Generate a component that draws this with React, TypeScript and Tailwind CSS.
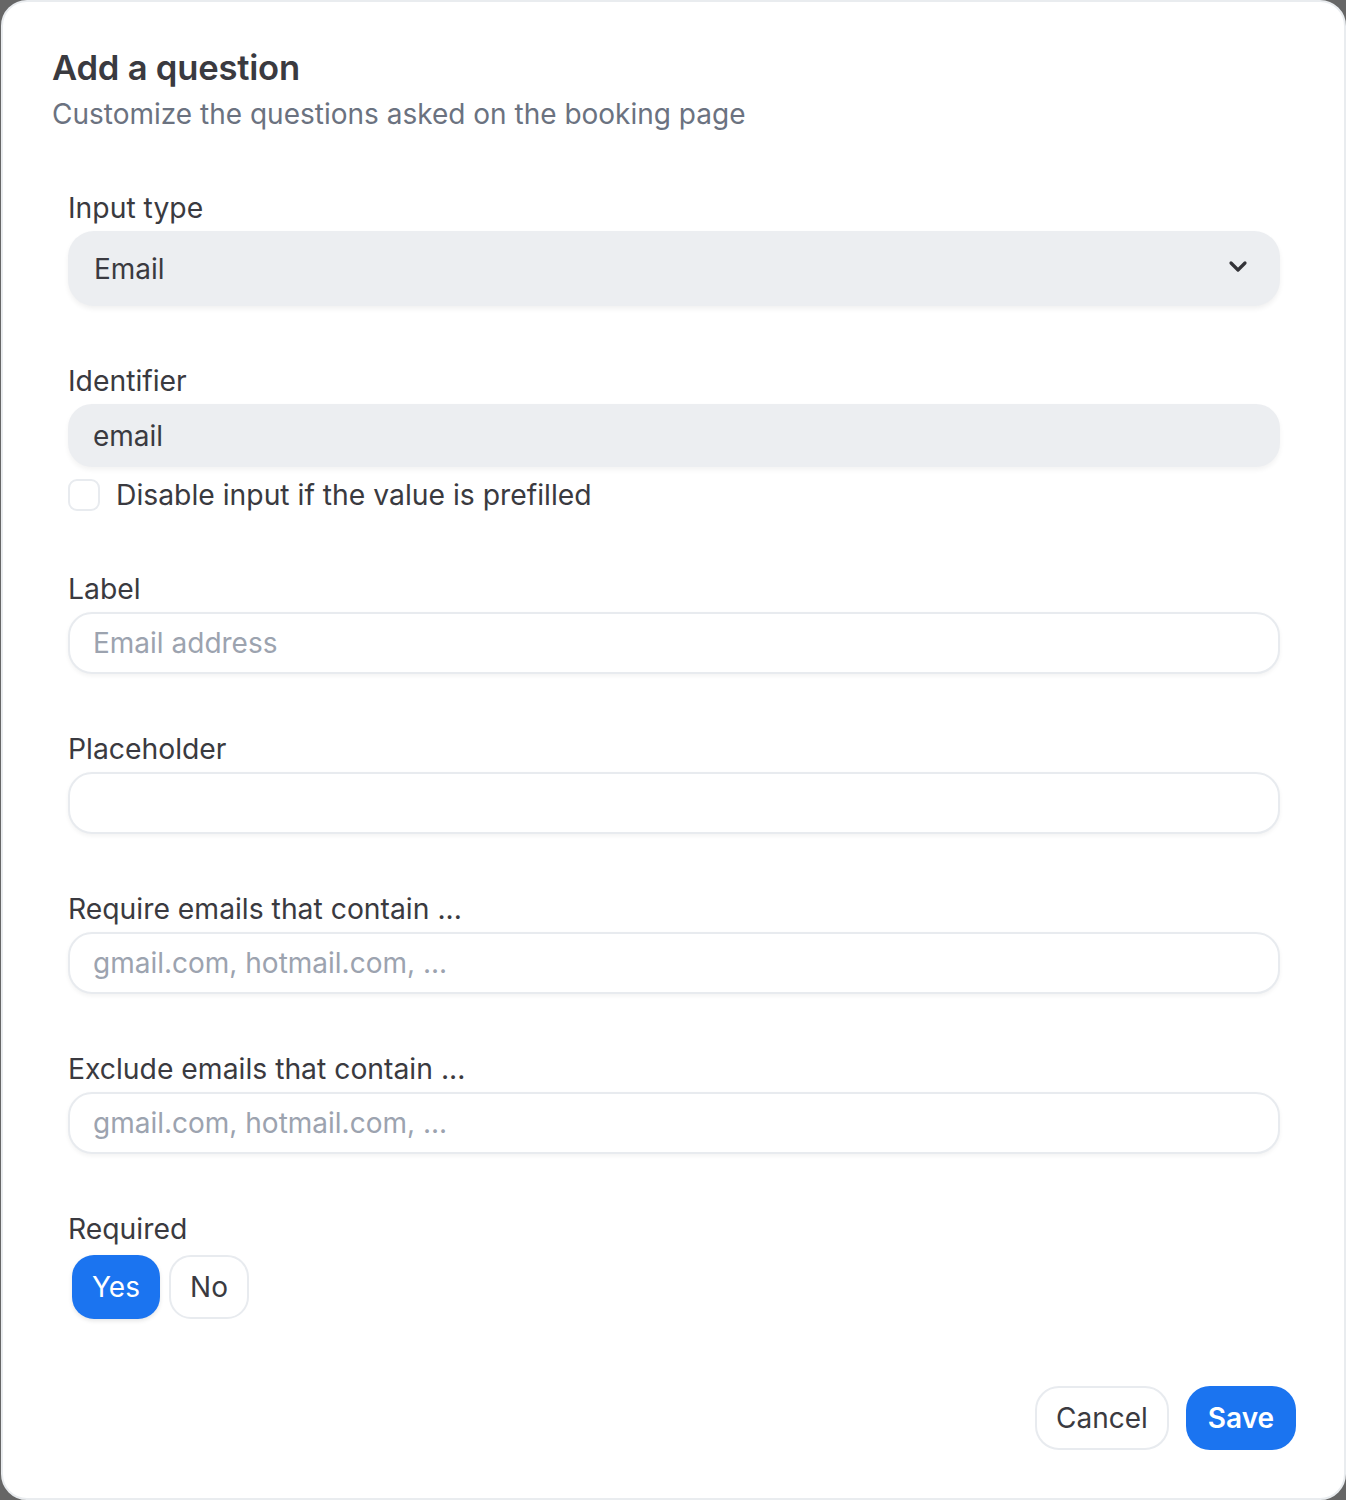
import React from "react";

function Label({ children }: { children: React.ReactNode }) {
  return <div className="text-[28.3px] leading-[40px] text-[#3a3a40] mb-[3px]">{children}</div>;
}

function TextInput({ placeholder }: { placeholder?: string }) {
  return (
    <div className="h-[62px] w-full rounded-[24px] border-2 border-[#e8ebef] bg-white shadow-[0_2px_4px_rgba(0,0,0,0.05)] flex items-center px-[23px]">
      <span className="text-[28px] text-[#9ca3af]">{placeholder ?? ""}</span>
    </div>
  );
}

export default function App() {
  return (
    <div className="w-[1346px] h-[1500px] bg-[#666666]" style={{ fontFamily: "Inter, 'Noto Sans', sans-serif" }}>
      <div className="w-[1345px] h-[1500px] ml-[1px] rounded-[26px] bg-white border-2 border-[#e9ecef] flex flex-col pl-[49px] pr-[48px] pt-[42px]">
        <h1 className="text-[34.6px] leading-[46px] font-semibold text-[#3a3a40] tracking-[-0.2px]">Add a question</h1>
        <p className="text-[28px] leading-[40px] text-[#6b7280] mt-[4px]">Customize the questions asked on the booking page</p>

        <div className="pl-[16px] pr-[16px] mt-[54px] flex flex-col">
          <div>
            <Label>Input type</Label>
            <div className="h-[75px] w-full rounded-[26px] bg-[#eceef1] shadow-[0_3px_5px_rgba(0,0,0,0.06)] flex items-center justify-between pl-[26px] pr-[30px]">
              <span className="text-[28px] text-[#3a3a40]">Email</span>
              <svg width="24" height="24" viewBox="0 0 24 24" fill="none" stroke="#333338" strokeWidth="3.2" strokeLinecap="round" strokeLinejoin="round" className="-mt-[6px]">
                <path d="M5 9l7 7 7-7" />
              </svg>
            </div>
          </div>

          <div className="mt-[55px]">
            <Label>Identifier</Label>
            <div className="h-[63px] w-full rounded-[24px] bg-[#eceef1] shadow-[0_3px_5px_rgba(0,0,0,0.05)] flex items-center px-[25px]">
              <span className="text-[28px] text-[#3a3a40]">email</span>
            </div>
            <div className="mt-[8px] h-[40px] flex items-center gap-[16px]">
              <div className="w-[32px] h-[32px] rounded-[9px] border-2 border-[#e8ebef] bg-white" />
              <span className="text-[28.3px] text-[#3a3a40]">Disable input if the value is prefilled</span>
            </div>
          </div>

          <div className="mt-[54px]">
            <Label>Label</Label>
            <TextInput placeholder="Email address" />
          </div>

          <div className="mt-[55px]">
            <Label>Placeholder</Label>
            <TextInput />
          </div>

          <div className="mt-[55px]">
            <Label>Require emails that contain ...</Label>
            <TextInput placeholder="gmail.com, hotmail.com, ..." />
          </div>

          <div className="mt-[55px]">
            <Label>Exclude emails that contain ...</Label>
            <TextInput placeholder="gmail.com, hotmail.com, ..." />
          </div>

          <div className="mt-[55px]">
            <Label>Required</Label>
            <div className="flex gap-[9px] pl-[4px] mt-[6px]">
              <button className="h-[64px] w-[88px] rounded-[22px] bg-[#1b74f0] text-white text-[28px] shadow-[0_2px_4px_rgba(0,0,0,0.1)]">Yes</button>
              <button className="h-[64px] w-[80px] rounded-[22px] bg-white border-2 border-[#e8ebef] text-[#3a3a40] text-[28px]">No</button>
            </div>
          </div>
        </div>

        <div className="mt-auto mb-[48px] flex justify-end gap-[17px]">
          <button className="h-[64px] w-[134px] rounded-[24px] bg-white border-2 border-[#e8ebef] text-[#3a3a40] text-[28px]">Cancel</button>
          <button className="h-[64px] w-[110px] rounded-[24px] bg-[#1b74f0] text-white text-[28px] font-semibold">Save</button>
        </div>
      </div>
    </div>
  );
}
